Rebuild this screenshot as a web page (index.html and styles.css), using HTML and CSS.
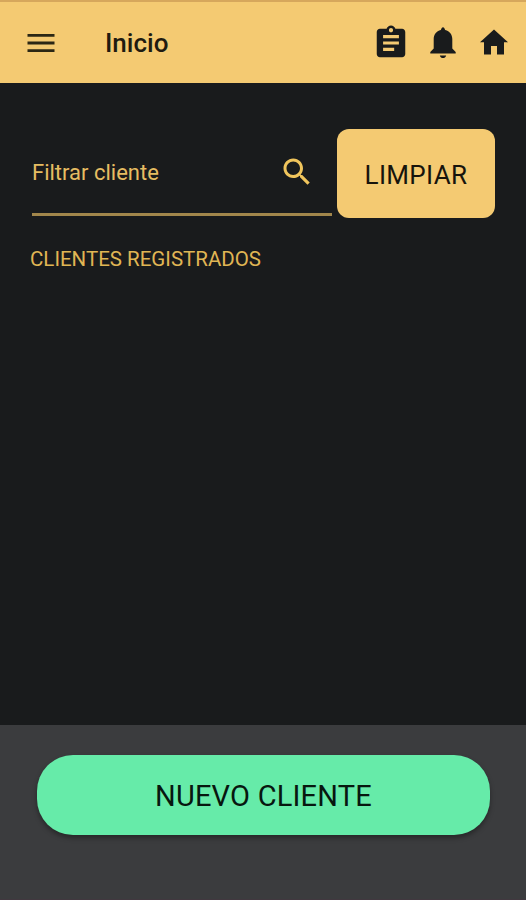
FILE: index.html
```html
<!DOCTYPE html>
<html lang="es">
<head>
  <meta charset="UTF-8" />
  <meta name="viewport" content="width=device-width, initial-scale=1.0" />
  <title>Inicio</title>
  <link rel="stylesheet" href="styles.css">
</head>
<body>
  <header class="toolbar">
    <button class="icon-btn menu-btn" aria-label="Menu">
      <svg width="36" height="36" viewBox="0 0 24 24"><path d="M3 18h18v-1.9H3V18zm0-5.050h18v-1.900H3v1.900zM3 6v1.900h18V6H3z"/></svg>
    </button>
    <h1 class="title">Inicio</h1>
    <nav class="actions">
      <button class="icon-btn" aria-label="Tareas">
        <svg width="38" height="38" viewBox="0 0 24 24"><path d="M19 3h-4.200C14.400 1.840 13.300 1 12 1s-2.400.84-2.800 2H5c-1.100 0-2 .9-2 2v14c0 1.100.9 2 2 2h14c1.100 0 2-.9 2-2V5c0-1.100-.9-2-2-2zm-7 -.4c.77 0 1.300 .6 1.300 1.300s-.53 1.300-1.300 1.300-1.300-.6-1.300-1.300.53-1.300 1.300-1.300zm2 14.400H7v-2h7v2zm3-4H7v-2h10v2zm0-4H7V7h10v2z"/></svg>
      </button>
      <button class="icon-btn" aria-label="Notificaciones">
        <svg width="26" height="32" viewBox="0 0 26 32"><path d="M13 .3c-1 0-1.600 1.200-2.200 2.700C6.300 4.200 3.700 7.700 3.700 12v9.600L.3 25v1.500h25.400V25l-3.400-3.400V12c0-4.300-2.600-7.800-7.100-9C14.600 1.500 14 .3 13 .3zM9.800 28.400c.6 1.800 1.800 2.700 3.200 2.700s2.600-.9 3.200-2.700z"/></svg>
      </button>
      <button class="icon-btn" aria-label="Inicio">
        <svg width="28" height="26" viewBox="0 0 28 26"><path d="M11 25.500v-8.500h6v8.500h7V13.300h4L14 .4 0 13.300h4v12.200z"/></svg>
      </button>
    </nav>
  </header>

  <main class="content">
    <form class="filter">
      <div class="field">
        <input type="text" placeholder="Filtrar cliente" aria-label="Filtrar cliente" />
        <svg width="36" height="36" viewBox="0 0 24 24"><path d="M15.500 14h-.79l-.28-.27C15.410 12.590 16 11.110 16 9.500 16 5.910 13.090 3 9.500 3S3 5.910 3 9.500 5.910 16 9.500 16c1.610 0 3.090-.59 4.230-1.570l.27.28v.79l5 4.990L20.490 19l-4.990-5zm-6 0C7.010 14 5 11.990 5 9.500S7.010 5 9.500 5 14 7.010 14 9.500 11.990 14 9.500 14z"/></svg>
      </div>
      <button type="reset" class="clear-btn">LIMPIAR</button>
    </form>
    <h2 class="list-title">CLIENTES REGISTRADOS</h2>
  </main>

  <footer class="footer">
    <button class="new-btn">NUEVO CLIENTE</button>
  </footer>
</body>
</html>
```
FILE: styles.css
```css
* {
  box-sizing: border-box;
  font-family: Roboto, sans-serif;
}
body {
  margin: 0;
  height: 100vh;
  display: flex;
  flex-direction: column;
  background: #191b1c;
  overflow: hidden;
}
button {
  border: none;
  padding: 0;
  cursor: pointer;
}
svg {
  display: block;
}
.toolbar {
  display: flex;
  align-items: center;
  height: 83px;
  padding: 0 18px 0 23px;
  background: #f4ca72;
  border-top: 2px solid #d6a75c;
}
.icon-btn {
  background: none;
  fill: #191b1c;
}
.menu-btn {
  fill: #2b2714;
}
.title {
  margin: 1px 0 0 46px;
  font-size: 26px;
  font-weight: 500;
  color: #1f1b10;
}
.actions {
  display: flex;
  align-items: center;
  margin-left: auto;
  gap: 24px;
}
.actions .icon-btn:first-child {
  margin-right: -4px;
}
.actions .icon-btn:last-child {
  margin-bottom: 1px;
}
.content {
  flex: 1;
  padding: 46px 31px 0 32px;
}
.filter {
  display: flex;
  gap: 5px;
}
.field {
  display: flex;
  align-items: center;
  width: 300px;
  height: 87px;
  padding: 2px 17px 0 0;
  border-bottom: 3px solid #a1864b;
}
.field input {
  flex: 1;
  min-width: 0;
  padding: 0;
  border: none;
  outline: none;
  background: none;
  font-size: 22px;
  color: #e6bd62;
}
.field input::placeholder {
  color: #e6bd62;
}
.field svg {
  fill: #f0c55c;
}
.clear-btn {
  width: 158px;
  height: 89px;
  padding-top: 2px;
  border-radius: 12px;
  background: #f4ca72;
  font-size: 26px;
  letter-spacing: 0.35px;
  color: #17140c;
}
.list-title {
  margin: 29px 0 0 -2px;
  font-size: 20.5px;
  font-weight: 400;
  color: #e0b654;
}
.footer {
  height: 175px;
  padding: 30px 36px 0 37px;
  background: #3b3c3e;
  border-bottom: 1px solid #41383f;
}
.new-btn {
  width: 100%;
  height: 80px;
  padding-top: 2px;
  border-radius: 36px;
  background: #66eba9;
  box-shadow: 0 3px 5px rgba(0, 0, 0, 0.35);
  font-size: 29px;
  letter-spacing: 0.2px;
  color: #07170f;
}
```
